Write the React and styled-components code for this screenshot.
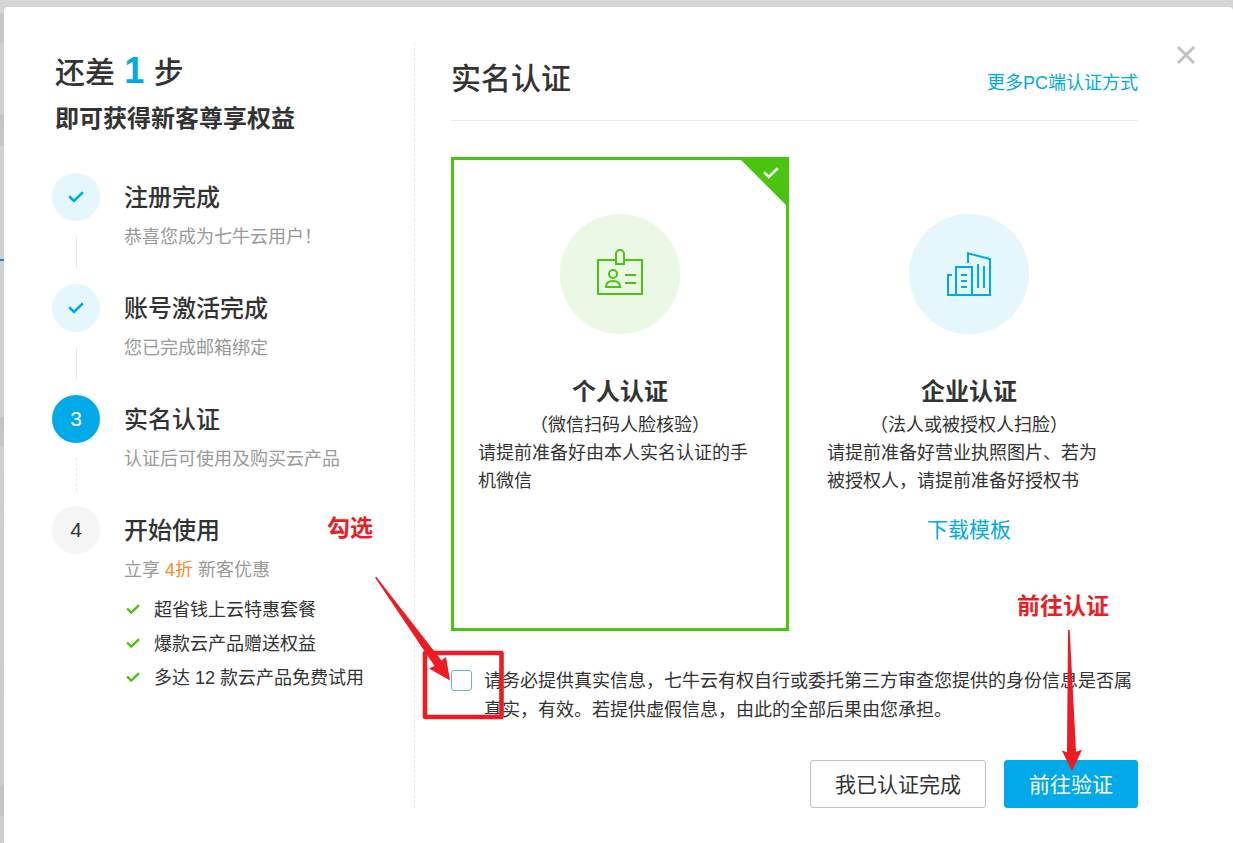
import React from 'react';
import styled, { createGlobalStyle, ThemeProvider } from 'styled-components';

const theme = {
    colors: {
        text: '#333',
        muted: '#999',
        primary: '#00a9e7',
        primaryLight: '#e5f6fd',
        success: '#4bc40f',
        successLight: '#ebf8e6',
        warning: '#f9892a',
        border: '#eaeaea',
        mark: '#ed1c24',
    },
    fontSize: {
        small: '18px',
        medium: '21px',
        large: '24px',
        title: '30px',
    },
};

const GlobalStyle = createGlobalStyle`
    * { box-sizing: border-box; }

    body {
        margin: 0;
        font-family: 'Liberation Sans', 'Noto Sans CJK SC', sans-serif;
        font-size: 18px;
        color: #333;
    }

    h1, h2, h3, p, ul, ol { margin: 0; padding: 0; }
    h1, h2, h3 { font-weight: 500; }
    ul, ol { list-style: none; }
    button, input { font-family: inherit; }
`;

/* The page behind the dialog only shows as a thin strip at the top and left */
const Page = styled.div`
    position: relative;
    display: flex;
    min-height: 100vh;
    padding: 7px 0 0 4px;
    background: linear-gradient(
        #d5d5d5 13px,
        #c6c6c6 13px, #c6c6c6 43px,
        #d0d0d0 43px, #d0d0d0 115px,
        #c3c3c3 115px, #c8c8c8 145px,
        #d0d0d0 145px, #d0d0d0 259px,
        #0f8fc0 259px, #0f8fc0 261px,
        #d0d0d0 261px, #d0d0d0 417px,
        #c3c3c3 417px, #c8c8c8 447px,
        #d0d0d0 447px, #cdcdcd 786px,
        #c3c3c3 786px, #c6c6c6 816px,
        #cfcfcf 816px
    );
`;

const Dialog = styled.section`
    position: relative;
    display: flex;
    flex: 1;
    padding: 36px 95px 35px 48px;
    border-radius: 4px 4px 0 1px;
    background: #fff;
`;

const CloseButton = styled.button`
    position: absolute;
    top: 36px;
    right: 35px;
    display: flex;
    padding: 2px;
    border: 0;
    background: none;
    cursor: pointer;
`;

const Sidebar = styled.aside`
    flex: 0 0 363px;
    border-right: 1px dashed ${({ theme }) => theme.colors.border};
`;

const Remaining = styled.h2`
    padding-left: 3px;
    font-size: ${({ theme }) => theme.fontSize.title};
    line-height: 60px;

    strong {
        margin: 0 1px;
        font-size: 36px;
        line-height: 1;
        color: ${({ theme }) => theme.colors.primary};
    }
`;

const Benefit = styled.p`
    margin-bottom: 38px;
    padding-left: 3px;
    font-size: ${({ theme }) => theme.fontSize.large};
    font-weight: 700;
    line-height: 32px;
`;

const StepItem = styled.li`
    display: flex;
    gap: 24px;
`;

const StepMarker = styled.div`
    display: flex;
    flex-direction: column;
    align-items: center;
`;

const markerColors = {
    done: { background: '#e5f6fd', color: '#00a9e7' },
    current: { background: '#00a9e7', color: '#fff' },
    todo: { background: '#f5f5f5', color: '#333' },
};

const StepCircle = styled.div`
    display: flex;
    align-items: center;
    justify-content: center;
    width: 48px;
    height: 48px;
    border-radius: 50%;
    font-size: ${({ theme }) => theme.fontSize.medium};
    background: ${({ $status }) => markerColors[$status].background};
    color: ${({ $status }) => markerColors[$status].color};
`;

const Connector = styled.div`
    height: 33px;
    margin: 15px 0;
    border-left: 1px ${({ $dashed }) => ($dashed ? 'dashed' : 'solid')} ${({ theme }) => theme.colors.border};
`;

const StepTitle = styled.h3`
    font-size: ${({ theme }) => theme.fontSize.large};
    line-height: 50px;
`;

const StepText = styled.p`
    line-height: 28px;
    color: ${({ theme }) => theme.colors.muted};

    em {
        font-style: normal;
        color: ${({ theme }) => theme.colors.warning};
    }
`;

const PerkList = styled.ul`
    margin-top: 9px;
`;

const Perk = styled.li`
    display: flex;
    align-items: center;
    gap: 14px;
    padding-left: 2px;
    line-height: 34px;
    color: ${({ theme }) => theme.colors.text};

    svg {
        margin-bottom: 2px;
        color: ${({ theme }) => theme.colors.success};
    }
`;

const Main = styled.main`
    flex: 1;
    min-width: 0;
    padding-left: 36px;
`;

const Header = styled.header`
    display: flex;
    align-items: baseline;
    justify-content: space-between;
    margin-bottom: 36px;
    padding-bottom: 5px;
    border-bottom: 1px solid ${({ theme }) => theme.colors.border};
`;

const Title = styled.h1`
    font-size: ${({ theme }) => theme.fontSize.title};
    line-height: 72px;
`;

const Link = styled.a`
    font-size: ${({ theme, $size }) => theme.fontSize[$size || 'small']};
    text-decoration: none;
    color: ${({ theme }) => theme.colors.primary};
`;

const Options = styled.div`
    display: grid;
    grid-template-columns: 1fr 1fr;
    gap: 11px;
`;

const OptionCard = styled.label`
    position: relative;
    display: flex;
    flex-direction: column;
    align-items: center;
    min-height: 474px;
    padding: 54px 24px 24px;
    border: 3px solid ${({ theme, $selected }) => ($selected ? theme.colors.success : 'transparent')};
    line-height: 28px;
    cursor: pointer;
`;

const HiddenRadio = styled.input`
    position: absolute;
    opacity: 0;
`;

const Corner = styled.svg`
    position: absolute;
    top: 0;
    right: 0;
`;

const OptionIcon = styled.div`
    display: flex;
    align-items: center;
    justify-content: center;
    width: 120px;
    height: 120px;
    margin-bottom: 39px;
    border-radius: 50%;
    background: ${({ theme, $tone }) => theme.colors[`${$tone}Light`]};
    color: ${({ theme, $tone }) => theme.colors[$tone]};
`;

const OptionTitle = styled.h3`
    font-size: ${({ theme }) => theme.fontSize.large};
    font-weight: 700;
    line-height: 38px;
`;

const OptionText = styled.p`
    align-self: stretch;
    margin-bottom: 21px;
`;

const Agreement = styled.label`
    display: flex;
    align-items: flex-start;
    gap: 12px;
    margin: 36px 0 35px;
    line-height: 29px;
`;

const Checkbox = styled.input`
    appearance: none;
    flex: none;
    width: 21px;
    height: 21px;
    margin: 3px 0 0;
    border: 1px solid #66b5d6;
    border-radius: 3px;
    background: #fff;

    &:checked { background: ${({ theme }) => theme.colors.primary}; }
`;

const Actions = styled.div`
    display: flex;
    justify-content: flex-end;
    gap: 18px;
`;

const Button = styled.button`
    height: 48px;
    padding: 0 24px 2px;
    border: 1px solid ${({ theme, $primary }) => ($primary ? theme.colors.primary : '#bfbfbf')};
    border-radius: 3px;
    font-size: ${({ theme }) => theme.fontSize.medium};
    background: ${({ theme, $primary }) => ($primary ? theme.colors.primary : '#fff')};
    color: ${({ theme, $primary }) => ($primary ? '#fff' : theme.colors.text)};
    cursor: pointer;
`;

const Marks = styled.svg`
    position: absolute;
    top: 0;
    left: 0;
    pointer-events: none;
`;

const MarkLabel = styled.span`
    position: absolute;
    top: ${({ $top }) => $top}px;
    left: ${({ $left }) => $left}px;
    font-size: 23px;
    font-weight: 700;
    line-height: 32px;
    color: ${({ theme }) => theme.colors.mark};
`;

const CheckIcon = ({ width = 16 }) => (
    <svg width={width} height={width * 0.75} viewBox="0 0 16 12" fill="none" stroke="currentColor" strokeWidth="2.6">
        <path d="M1.2 5.2 6 9.9l8.9-8.6" />
    </svg>
);

const IdCardIcon = () => (
    <svg width="50" height="50" viewBox="0 0 50 50" fill="none" stroke="currentColor" strokeWidth="2">
        <path d="M20 11H3v34h44V11H30" />
        <path d="M21 15V5a4 4 0 0 1 8 0v10z" />
        <circle cx="18" cy="25" r="4" />
        <path d="M11 38c0-4 3-6 7-6s7 2 7 6z" />
        <path d="M30 26h11M30 34h11" />
    </svg>
);

const BuildingIcon = () => (
    <svg width="50" height="50" viewBox="0 0 50 50" fill="none" stroke="currentColor" strokeWidth="2">
        <path d="M8 26H4v20h42V10L24 4.300V14" />
        <path d="M12 46V18h16v28" />
        <path d="M17 26h6M17 32h6M17 38h6M34 15v24M40 17v22" />
    </svg>
);

const Step = ({ status, number, title, text, last, dashed, children }) => (
    <StepItem>
        <StepMarker>
            <StepCircle $status={status}>{status === 'done' ? <CheckIcon /> : number}</StepCircle>
            {!last && <Connector $dashed={dashed} />}
        </StepMarker>
        <div>
            <StepTitle>{title}</StepTitle>
            <StepText>{text}</StepText>
            {children}
        </div>
    </StepItem>
);

const perks = ['超省钱上云特惠套餐', '爆款云产品赠送权益', '多达 12 款云产品免费试用'];

const App = () => {
    const [type, setType] = React.useState('personal');

    const renderOption = (value, tone, icon, title, note, text, extra) => (
        <OptionCard $selected={type === value}>
            <HiddenRadio type="radio" name="type" checked={type === value} onChange={() => setType(value)} />
            {type === value && (
                <Corner width="45" height="45" viewBox="0 0 45 45">
                    <path d="M0 0h45v45z" fill={theme.colors.success} />
                    <path d="M23 12.200l4.800 4.800 8.900-8.700" fill="none" stroke="#fff" strokeWidth="2.6" />
                </Corner>
            )}
            <OptionIcon $tone={tone}>{icon}</OptionIcon>
            <OptionTitle>{title}</OptionTitle>
            <p>{note}</p>
            <OptionText>{text}</OptionText>
            {extra}
        </OptionCard>
    );

    return (
        <ThemeProvider theme={theme}>
            <GlobalStyle />
            <Page>
                <Dialog>
                    <Sidebar>
                        <Remaining>还差 <strong>1</strong> 步</Remaining>
                        <Benefit>即可获得新客尊享权益</Benefit>
                        <ol>
                            <Step status="done" title="注册完成" text="恭喜您成为七牛云用户！" />
                            <Step status="done" title="账号激活完成" text="您已完成邮箱绑定" />
                            <Step status="current" number="3" title="实名认证" text="认证后可使用及购买云产品" dashed />
                            <Step status="todo" number="4" title="开始使用" text={<>立享 <em>4折</em> 新客优惠</>} last>
                                <PerkList>
                                    {perks.map((perk) => (
                                        <Perk key={perk}><CheckIcon width={14} />{perk}</Perk>
                                    ))}
                                </PerkList>
                            </Step>
                        </ol>
                    </Sidebar>
                    <Main>
                        <Header>
                            <Title>实名认证</Title>
                            <Link href="#">更多PC端认证方式</Link>
                        </Header>
                        <Options>
                            {renderOption(
                                'personal', 'success', <IdCardIcon />, '个人认证',
                                '（微信扫码人脸核验）',
                                '请提前准备好由本人实名认证的手机微信'
                            )}
                            {renderOption(
                                'company', 'primary', <BuildingIcon />, '企业认证',
                                '（法人或被授权人扫脸）',
                                '请提前准备好营业执照图片、若为被授权人，请提前准备好授权书',
                                <Link href="#" $size="medium">下载模板</Link>
                            )}
                        </Options>
                        <Agreement>
                            <Checkbox type="checkbox" />
                            <span>请务必提供真实信息，七牛云有权自行或委托第三方审查您提供的身份信息是否属真实，有效。若提供虚假信息，由此的全部后果由您承担。</span>
                        </Agreement>
                        <Actions>
                            <Button type="button">我已认证完成</Button>
                            <Button type="button" $primary>前往验证</Button>
                        </Actions>
                    </Main>
                    <CloseButton type="button" aria-label="关闭">
                        <svg width="20" height="20" viewBox="0 0 20 20" stroke="#bfbfbf" strokeWidth="2.8">
                            <path d="M2 2l16 16M18 2L2 18" />
                        </svg>
                    </CloseButton>
                </Dialog>
                <Marks width="1233" height="843" viewBox="0 0 1233 843" fill={theme.colors.mark}>
                    <rect x="425" y="653" width="76.500" height="64" fill="none" stroke={theme.colors.mark} strokeWidth="4.600" strokeLinejoin="round" />
                    <path d="M375 577.500l1.500-.5L441.500 660.500l4.500-3.500 4 23.500-21-12 5.500-2.500z" />
                    <path d="M1068 630h1.700l6.300 121.700 6-2-10 21.300-10.300-20.700 5.300 2z" />
                </Marks>
                <MarkLabel $top={512} $left={327}>勾选</MarkLabel>
                <MarkLabel $top={590} $left={1017}>前往认证</MarkLabel>
            </Page>
        </ThemeProvider>
    );
};

export default App;
